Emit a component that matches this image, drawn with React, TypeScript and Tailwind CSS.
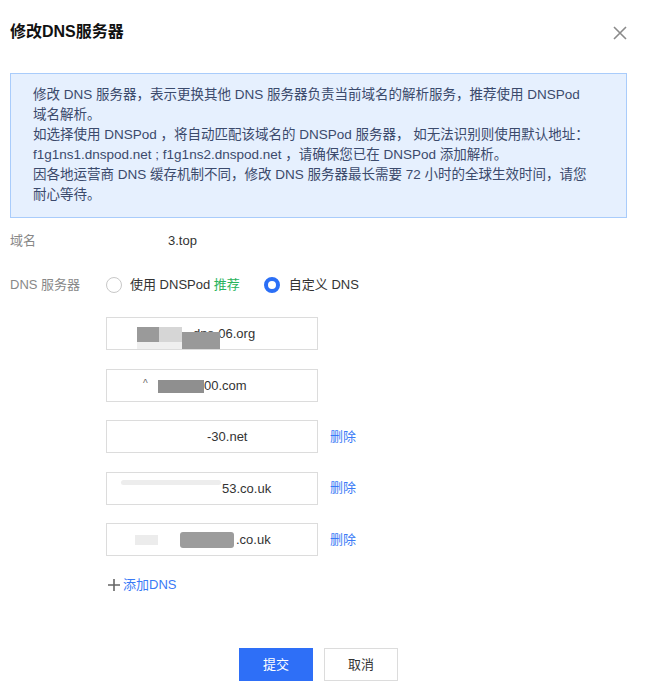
import React from 'react';

const font = { fontFamily: "'Liberation Sans', 'Noto Sans CJK SC', sans-serif" };

function Radio({ checked }: { checked?: boolean }) {
    return checked ? (
        <span className="inline-block w-4 h-4 rounded-full border-[4px] border-[#2b6ff6] bg-white" />
    ) : (
        <span className="inline-block w-4 h-4 rounded-full border border-[#c8c8c8] bg-white" />
    );
}

function DnsInput({ children, del }: { children: React.ReactNode; del?: boolean }) {
    return (
        <div className="flex items-center">
            <div className="relative w-[212px] h-[33px] border border-[#dcdcdc] bg-white overflow-hidden text-[13px] text-[#333]">
                {children}
            </div>
            {del && <span className="ml-[12px] text-[13px] text-[#3a7af6]">删除</span>}
        </div>
    );
}

export default function App() {
    return (
        <div className="w-[650px] h-[695px] bg-white flex flex-col" style={font}>
            {/* header */}
            <div className="flex items-center justify-between pl-[10px] pr-[23px] pt-[22px] h-[42px]">
                <h1 className="text-[16px] font-bold text-[#111] leading-[20px]">修改DNS服务器</h1>
                <svg width="14" height="14" viewBox="0 0 14 14" className="mt-[1px]">
                    <path d="M1 1L13 13M13 1L1 13" stroke="#8a8a8a" strokeWidth="1.6" />
                </svg>
            </div>

            {/* notice */}
            <div className="ml-[10px] mr-[23px] mt-[31px] border border-[#a9ccfb] bg-[#e6f0fe] pl-[22px] pt-[11px] pb-[12px] text-[13.5px] leading-[20px] text-[#3b4a6c] whitespace-nowrap">
                修改 DNS 服务器，表示更换其他 DNS 服务器负责当前域名的解析服务，推荐使用 DNSPod
                <br />
                域名解析。
                <br />
                如选择使用 DNSPod ，将自动匹配该域名的 DNSPod 服务器， 如无法识别则使用默认地址：
                <br />
                f1g1ns1.dnspod.net ; f1g1ns2.dnspod.net ，请确保您已在 DNSPod 添加解析。
                <br />
                因各地运营商 DNS 缓存机制不同，修改 DNS 服务器最长需要 72 小时的全球生效时间，请您
                <br />
                耐心等待。
            </div>

            {/* form */}
            <div className="px-[10px] mt-[13px] flex flex-col text-[13px] leading-[20px]">
                <div className="flex items-center">
                    <span className="w-[96px] text-[#888]">域名</span>
                    <span className="pl-[62px] text-[#333]">3.top</span>
                </div>

                <div className="flex items-center mt-[24px]">
                    <span className="w-[96px] text-[#888]">DNS 服务器</span>
                    <label className="flex items-center gap-[8px] text-[#333]">
                        <Radio />
                        <span>
                            使用 DNSPod <span className="text-[#29b35c]">推荐</span>
                        </span>
                    </label>
                    <label className="flex items-center gap-[9px] text-[#333] ml-[24px]">
                        <Radio checked />
                        <span>自定义 DNS</span>
                    </label>
                </div>

                <div className="flex flex-col gap-[18.5px] mt-[22px] ml-[96px]">
                    <DnsInput>
                        <span className="absolute left-[30px] top-[9px] w-[22px] h-[15px] bg-[#9a9a9a]" />
                        <span className="absolute left-[52px] top-[9px] w-[23px] h-[15px] bg-[#d6d6d6]" />
                        <span className="absolute left-[30px] top-[24px] w-[45px] h-[8px] bg-[#efefef]" />
                        <span className="absolute left-[86px] top-[6px]">dns-06.org</span>
                        <span className="absolute left-[75px] top-[14px] w-[38px] h-[18px] bg-[#999]" />
                    </DnsInput>
                    <DnsInput>
                        <span className="absolute left-[36px] top-[4px] text-[10px] text-[#666]">^</span>
                        <span className="absolute left-[51px] top-[10px] w-[46px] h-[13px] bg-[#8f8f8f]" />
                        <span className="absolute left-[97px] top-[6px]">00.com</span>
                    </DnsInput>
                    <DnsInput del>
                        <span className="absolute left-[100px] top-[6px]">-30.net</span>
                    </DnsInput>
                    <DnsInput del>
                        <span className="absolute left-[14px] top-[7px] w-[100px] h-[5px] rounded-full bg-[#ededed]" />
                        <span className="absolute left-[115px] top-[6px]">53.co.uk</span>
                    </DnsInput>
                    <DnsInput del>
                        <span className="absolute left-[28px] top-[11px] w-[23px] h-[10px] bg-[#ececec]" />
                        <span className="absolute left-[73px] top-[8px] w-[54px] h-[16px] rounded-[3px] bg-[#9c9c9c]" />
                        <span className="absolute left-[129px] top-[6px]">.co.uk</span>
                    </DnsInput>
                </div>

                <div className="flex items-center ml-[98px] mt-[19px]">
                    <svg width="12" height="12" viewBox="0 0 12 12">
                        <path d="M6 0V12M0 6H12" stroke="#666" strokeWidth="1.6" />
                    </svg>
                    <span className="ml-[3px] text-[#3a7af6]">添加DNS</span>
                </div>
            </div>

            {/* footer */}
            <div className="flex gap-[11px] pl-[239px] mt-[53px]">
                <button className="w-[74px] h-[33px] bg-[#2e6ff7] text-white text-[13px]">提交</button>
                <button className="w-[74px] h-[33px] bg-white border border-[#dcdcdc] text-[#333] text-[13px]">取消</button>
            </div>
        </div>
    );
}
